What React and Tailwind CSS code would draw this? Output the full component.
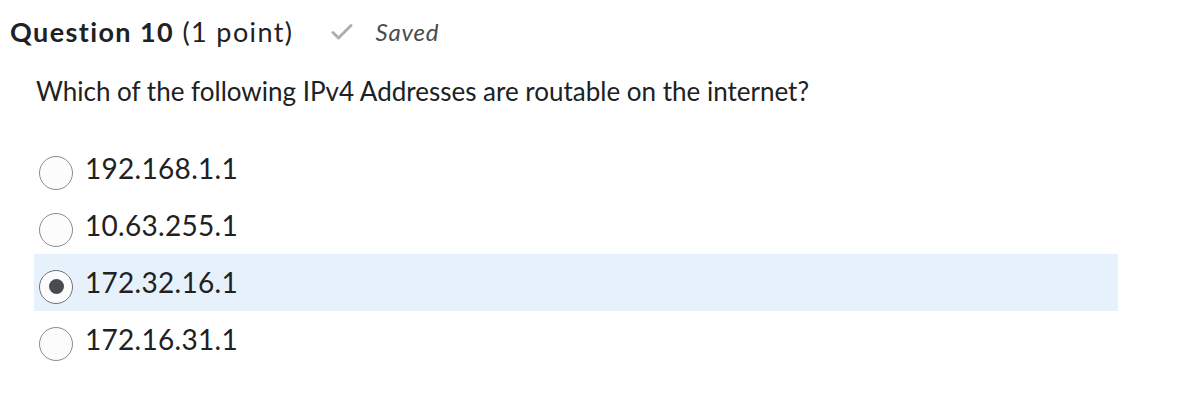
import React, { useState } from 'react'

const options = ['192.168.1.1', '10.63.255.1', '172.32.16.1', '172.16.31.1']

const Radio = ({ checked }) => (
  <span
    className={`mt-2 flex h-[34px] w-[34px] shrink-0 items-center justify-center rounded-full border bg-[#fcfcfd] ${
      checked ? 'border-[#6e7376]' : 'border-[#868c8f]'
    }`}
  >
    {checked && <span className="h-[15px] w-[15px] rounded-full bg-[#494c4e]" />}
  </span>
)

export default function App() {
  const [selected, setSelected] = useState(2)

  return (
    <div className="min-h-screen bg-white pt-4 text-[#202122]" style={{ fontFamily: 'Lato, "Noto Sans", sans-serif' }}>
      {/* Header */}
      <div className="flex items-center pl-[10px] leading-[31px]">
        <h2 className="text-[27px] tracking-[1.4px]">
          <span className="font-bold">Question 10</span> (1 point)
        </h2>
        <span className="ml-[38px] flex items-center gap-[22px] text-[#494c4e]">
          <svg width="22" height="18" viewBox="0 0 22 18" fill="none">
            <path d="M2 9.5l5.5 5.5L20 2.5" stroke="#a9b0b5" strokeWidth="3" strokeLinecap="round" strokeLinejoin="round" />
          </svg>
          <span className="text-[24px] italic tracking-[0.8px]">Saved</span>
        </span>
      </div>

      {/* Question */}
      <p className="mt-[29px] pl-[36px] text-[26px] leading-[31px]">
        Which of the following IPv4 Addresses are routable on the internet?
      </p>

      {/* Options */}
      <div className="mt-[33px] ml-[34px] w-[1084px]">
        {options.map((opt, i) => (
          <label
            key={opt}
            onClick={() => setSelected(i)}
            className={`flex h-[57px] cursor-pointer items-center gap-[12px] pl-[5px] ${
              selected === i ? 'bg-[#e7f1fb]' : ''
            }`}
          >
            <Radio checked={selected === i} />
            <span className="text-[28px] leading-[31px] tracking-[0.3px]">{opt}</span>
          </label>
        ))}
      </div>
    </div>
  )
}
